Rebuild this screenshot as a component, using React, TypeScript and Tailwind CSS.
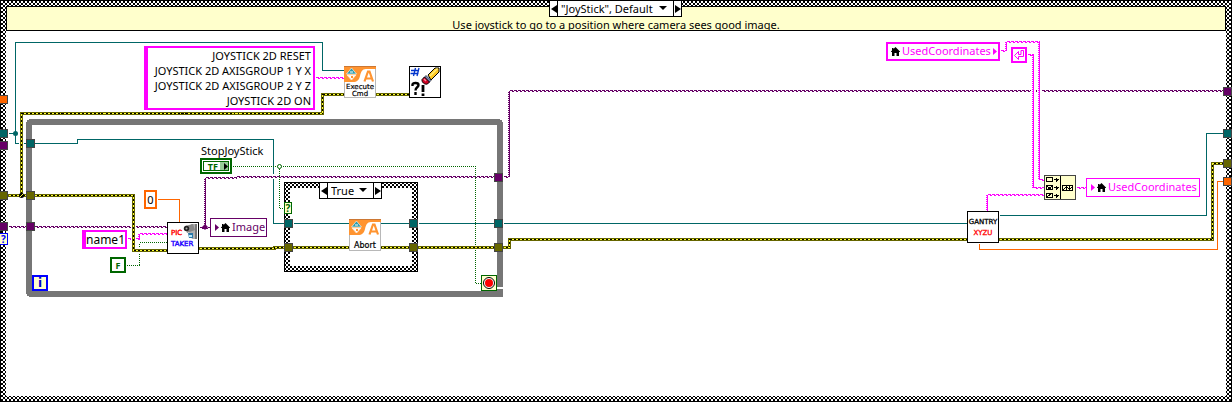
import React from 'react';

type Pt = [number, number];
type Kind = 'ref' | 'error' | 'image' | 'string' | 'bool' | 'number';

const COLORS: Record<Kind, string> = {
  ref: '#006666',
  error: '#666600',
  image: '#660066',
  string: '#ff00ff',
  bool: '#006600',
  number: '#ff6600',
};

const line = (pts: Pt[], d = 0) => pts.map(([x, y]) => `${x + 0.5 + d},${y + 0.5 + d}`).join(' ');

function Wire({ kind, pts, over }: { kind: Kind; pts: Pt[]; over?: boolean }) {
  const c = COLORS[kind];
  const p = line(pts);
  return (
    <g fill="none" stroke={c} strokeWidth={1} shapeRendering="crispEdges">
      {over && <polyline points={p} stroke="#fff" strokeWidth={5} />}
      {kind === 'error' && (
        <>
          <polyline points={p} strokeWidth={3} strokeLinecap="square" />
          <polyline points={p} stroke="#000" />
          <polyline points={p} stroke="#ffff33" strokeDasharray="2 2" />
        </>
      )}
      {(kind === 'image' || kind === 'string') &&
        pts.slice(1).map((b, i) => {
          const a = pts[i];
          const vertical = a[0] === b[0];
          return vertical ? (
            <g key={i}>
              <polyline points={line([a, b])} />
              <polyline points={line([[a[0] - 1, a[1]], [b[0] - 1, b[1]]])} strokeDasharray="1 1" />
            </g>
          ) : (
            <g key={i}>
              <polyline points={line([a, b])} strokeDasharray="3 1" />
              <polyline points={line([[a[0], a[1] + 1], [b[0], b[1] + 1]])} strokeDasharray="2 2" strokeDashoffset={2} />
            </g>
          );
        })}
      {kind === 'bool' && <polyline points={p} strokeDasharray="1 1" />}
      {(kind === 'ref' || kind === 'number') && <polyline points={p} />}
    </g>
  );
}

const WIRES: { kind: Kind; pts: Pt[]; over?: boolean }[] = [
  { kind: 'ref', pts: [[8, 133], [15, 133]] },
  { kind: 'ref', pts: [[344, 70], [322, 70], [322, 42], [15, 42], [15, 143], [26, 143]] },
  { kind: 'ref', pts: [[34, 143], [77, 143], [77, 139], [273, 139], [273, 223], [284, 223]] },
  { kind: 'ref', pts: [[293, 223], [409, 223]] },
  { kind: 'ref', pts: [[418, 223], [494, 223]] },
  { kind: 'ref', pts: [[503, 223], [967, 223]] },
  { kind: 'ref', pts: [[999, 215], [1206, 215], [1206, 133], [1223, 133]] },
  { kind: 'image', pts: [[8, 226], [26, 226]] },
  { kind: 'image', pts: [[34, 226], [167, 226]] },
  { kind: 'image', pts: [[199, 227], [210, 227]] },
  { kind: 'image', pts: [[205, 227], [205, 177], [236, 177]], over: true },
  { kind: 'image', pts: [[236, 176], [494, 176]], over: true },
  { kind: 'image', pts: [[503, 176], [509, 176], [509, 90], [1223, 90]] },
  { kind: 'string', pts: [[127, 238], [139, 238], [139, 233], [167, 233]] },
  { kind: 'bool', pts: [[126, 265], [139, 265], [139, 242], [167, 242]] },
  { kind: 'bool', pts: [[232, 166], [475, 166], [475, 283], [481, 283]] },
  { kind: 'bool', pts: [[279, 166], [279, 208], [284, 208]] },
  { kind: 'error', pts: [[21, 195], [21, 113], [322, 113], [322, 94], [344, 94]], over: true },
  { kind: 'error', pts: [[8, 195], [26, 195]] },
  { kind: 'error', pts: [[376, 94], [409, 94]] },
  { kind: 'error', pts: [[34, 195], [133, 195], [133, 250], [167, 250]], over: true },
  { kind: 'error', pts: [[199, 248], [274, 248], [274, 247], [284, 247]] },
  { kind: 'error', pts: [[293, 247], [409, 247]] },
  { kind: 'error', pts: [[418, 247], [494, 247]] },
  { kind: 'error', pts: [[503, 247], [509, 247], [509, 239], [967, 239]] },
  { kind: 'error', pts: [[999, 239], [1212, 239], [1212, 163], [1223, 163]] },
  { kind: 'string', pts: [[315, 77], [344, 77]] },
  { kind: 'number', pts: [[157, 199], [179, 199], [179, 222]] },
  { kind: 'number', pts: [[979, 243], [979, 249], [1217, 249], [1217, 181], [1223, 181]] },
  { kind: 'string', pts: [[1027, 54], [1033, 54], [1033, 187], [1044, 187]], over: true },
  { kind: 'string', pts: [[1000, 50], [1006, 50], [1006, 41], [1039, 41], [1039, 179], [1044, 179]], over: true },
  { kind: 'string', pts: [[987, 211], [987, 194], [1044, 194]] },
  { kind: 'string', pts: [[1076, 187], [1086, 187]] },
];

const TUNNELS: [number, number, string][] = [
  [-1, 95, '#ff6600'], [-1, 129, '#006666'], [-1, 141, '#660066'], [-1, 191, '#666600'], [-1, 222, '#660066'],
  [26, 139, '#006666'], [26, 191, '#666600'], [26, 222, '#660066'],
  [494, 173, '#660066'], [494, 219, '#006666'], [494, 243, '#666600'],
  [284, 219, '#006666'], [284, 243, '#666600'], [409, 219, '#006666'], [409, 243, '#666600'],
  [1223, 87, '#660066'], [1223, 129, '#006666'], [1223, 159, '#666600'], [1223, 177, '#ff6600'],
];

function Wiring() {
  return (
    <svg className="absolute left-0 top-0" width="1232" height="402" aria-hidden="true">
      <defs>
        <pattern id="weave" width="4" height="4" patternUnits="userSpaceOnUse">
          <rect width="4" height="4" fill="#fff" />
          <path d="M0 0h2v2h-2zM2 2h2v2h-2z" fill="#000" />
        </pattern>
      </defs>
      <g shapeRendering="crispEdges">
        <path d="M29 122H500V287" fill="none" stroke="#767676" strokeWidth="6" />
        <path d="M29 119V294H503" fill="none" stroke="#767676" strokeWidth="6" />
        <path d="M26 119h3v1h-2v2h-1zM26 297h3v-1h-2v-2h-1zM503 119h-3v1h2v2h1z" fill="#fff" />
        <rect x="497" y="288" width="6" height="8" fill="#767676" />
        <rect x="497" y="287" width="6" height="2" fill="#fff" />
      </g>
      {WIRES.map((w, i) => <Wire key={i} {...w} />)}
      <circle cx="15.5" cy="133.5" r="2.5" fill="#006666" />
      <circle cx="21.5" cy="195.5" r="2.5" fill="#000" />
      <path d="M20 197l3-3" stroke="#ff3" />
      <circle cx="279.5" cy="166.5" r="2" fill="#fff" stroke="#006600" />
      <path d="M205 224l3 3-3 3-3-3z" fill="#660066" />
      <path d="M284 182h134v90h-134zM290 188v78h122v-78z" fill="url(#weave)" fillRule="evenodd" shapeRendering="crispEdges" />
      <rect x="284.5" y="182.5" width="133" height="89" fill="none" stroke="#000" shapeRendering="crispEdges" />
      <g shapeRendering="crispEdges">
        {TUNNELS.map(([x, y, c], i) => (
          <rect key={i} x={x + 0.5} y={y + 0.5} width="8" height="8" fill={c} stroke="#444" />
        ))}
      </g>
    </svg>
  );
}

function Selector({ label, value, options }: { label: string; value: string; options: string[] }) {
  const arrow = 'flex w-[7px] shrink-0 items-center justify-center';
  return (
    <div className="flex h-full w-full border border-black bg-white text-black">
      <button className={arrow} aria-label={`Previous ${label}`}>
        <svg width="6" height="8" viewBox="0 0 6 8"><path d="M6 0v8L0 4z" /></svg>
      </button>
      <div className="relative flex min-w-0 flex-1 border-x border-black">
        <select aria-label={label} defaultValue={value} className="w-full appearance-none bg-transparent pl-[3px] text-[11px] leading-[15px] outline-none">
          {options.map((o) => <option key={o}>{o}</option>)}
        </select>
        <svg className="pointer-events-none absolute right-1.5 top-[5px]" width="8" height="4" viewBox="0 0 8 4"><path d="M0 0h8L4 4z" /></svg>
      </div>
      <button className={arrow} aria-label={`Next ${label}`}>
        <svg width="6" height="8" viewBox="0 0 6 8"><path d="M0 0v8l6-4z" /></svg>
      </button>
    </div>
  );
}

const Home = () => (
  <svg className="shrink-0" width="9" height="9" viewBox="0 0 9 9" fill="#000" aria-hidden="true">
    <path d="M4.500 0L9 4.500V5H8v4H5.500V6h-2v3H1V5H0v-.5L1 3.500V1h1.500v1z" />
  </svg>
);
const Play = () => (
  <svg className="shrink-0" width="4" height="7" viewBox="0 0 4 7" fill="currentColor" aria-hidden="true"><path d="M0 0v7l4-3.500z" /></svg>
);

function AxisIcon({ lines }: { lines: string[] }) {
  const single = lines.length === 1;
  return (
    <svg width="32" height="32" viewBox="0 0 32 32" role="img" aria-label={lines.join(' ')}>
      <rect x=".5" y=".5" width="31" height="31" fill="#fff" stroke="#b8b8b8" />
      <path d="M0 0h32v3H22c-4 0-5 3-6 7s-3 6-7 6H0z" fill="#ff9430" />
      <path d="M0 0h32v1H0z" fill="#cc7733" />
      <path d="M7.500 2L12.500 8h-10z" fill="#2c9cac" stroke="#fff" strokeWidth=".6" />
      <path d="M6 5.500h3v1H6z" fill="#fff" />
      <path d="M3 9h9l-4.500 5z" fill="#fff" stroke="#ffe6cc" />
      <path d="M7 10h2v2H7z" fill="#ff9430" />
      <path d="M20.500 15.500L24 5.500h1.500L29 15.500M22 12.500h6" fill="none" stroke="#ff9430" strokeWidth="2.200" />
      {lines.map((t, i) => (
        <text key={t} x="16" y={(single ? 29 : 23) + i * 7} textAnchor="middle" fontSize={single ? 8 : 7} fontFamily="DejaVu Sans, sans-serif" fill="#000" stroke="#000" strokeWidth=".2">{t}</text>
      ))}
    </svg>
  );
}

function EraserIcon() {
  return (
    <svg width="32" height="32" viewBox="0 0 32 32" role="img" aria-label="Clear errors">
      <rect x=".5" y=".5" width="31" height="31" fill="#fff" stroke="#000" />
      <path d="M4.500 10L6.500 2M8 10L10 2M2 4.500h8M1.500 7.500h8" stroke="#0033cc" strokeWidth="1.300" />
      <path d="M3.500 20v-1.500c0-2 6-2 6 .5 0 2.500-3 2-3 5.500M6.500 26v3" fill="none" stroke="#000" strokeWidth="2.400" />
      <path d="M14 19v7M14 27.500v2.500" stroke="#000" strokeWidth="2.800" />
      <path d="M19 9l7-7h4v4l-8 8z" fill="#ffc820" stroke="#000" />
      <path d="M21 10l7.500-7.500" stroke="#fff080" strokeWidth="1.500" />
      <path d="M17 9.500l5 5-2 2-5-5z" fill="#7788bb" stroke="#000" strokeWidth=".6" />
      <path d="M15.500 11l5 5-2 2c-3 1-6-2-5.500-4.500z" fill="#cc0022" stroke="#000" />
      <path d="M15 13l2 2" stroke="#ff8899" strokeWidth="1.500" />
    </svg>
  );
}

function PicTakerIcon() {
  return (
    <svg width="32" height="32" viewBox="0 0 32 32" role="img" aria-label="Pic taker">
      <rect x=".5" y=".5" width="31" height="31" fill="#fff" stroke="#000" />
      <path d="M24 2h6v15h-5l-3-6z" fill="#b0b0b0" />
      <path d="M28 2h2v15h-2z" fill="#777" />
      <path d="M18 4l8-2 2 6-8 3z" fill="#888" />
      <circle cx="19.500" cy="6.500" r="2.700" fill="#222" />
      <circle cx="19.500" cy="6.500" r="1" fill="#aaa" />
      <path d="M21 11h5v5h-4z" fill="#2c78a8" />
      <path d="M22 13h3v2h-3z" fill="#b8e8f8" />
      <g fontFamily="DejaVu Sans, sans-serif" fontSize="7" strokeWidth=".4">
        <text x="4" y="13" fill="#f00" stroke="#f00">PIC</text>
        <text x="4" y="24" fill="#20f" stroke="#20f">TAKER</text>
      </g>
    </svg>
  );
}

function GantryIcon() {
  return (
    <svg width="32" height="32" viewBox="0 0 32 32" role="img" aria-label="Gantry">
      <rect x=".5" y=".5" width="31" height="31" fill="#fff" stroke="#000" />
      <g fontFamily="DejaVu Sans, sans-serif" fontSize="7" textAnchor="middle">
        <text x="16" y="13" fill="#000" stroke="#000" strokeWidth=".3">GANTRY</text>
        <text x="16" y="24" fill="#f00" stroke="#f00" strokeWidth=".3">XYZU</text>
      </g>
    </svg>
  );
}

function ConcatIcon() {
  return (
    <svg width="32" height="25" viewBox="0 0 32 25" role="img" aria-label="Concatenate" shapeRendering="crispEdges">
      <rect x=".5" y=".5" width="31" height="24" fill="#ffffcc" stroke="#444" />
      <path d="M16.500 1v23" stroke="#000" />
      <g fill="none" stroke="#000">
        <path d="M2.500 2.500h6v4h-6zM2.500 10.500h6v4h-6zM2.500 18.500h6v4h-6z" />
        <path d="M10 4.500h5M12.500 2.500v4M13.500 3.500v2M10 12.500h5M12.500 10.500v4M13.500 11.500v2M10 20.500h5M12.500 18.500v4M13.500 19.500v2" />
        <path d="M3 11l5 4M3 15l5-4M3 22l5-4" />
        <path d="M18.500 10.500h10v5h-10zM22.500 10v5M25.500 10v5M19 15l4-4M22 11l4 4M25 15l4-4" />
      </g>
    </svg>
  );
}

export default function App() {
  return (
    <main className="relative flex min-h-screen w-full flex-col bg-white font-['Noto_Sans','Segoe_UI',sans-serif] text-[11px] text-black">
      <div className="flex flex-1 flex-col border border-black bg-[conic-gradient(#000_25%,#fff_0_50%,#000_0_75%,#fff_0)] bg-[size:4px_4px] p-[5px]">
        <header className="flex h-[25px] items-end justify-center border border-black bg-[#ffffcc]">
          <p className="leading-[11px]">Use joystick to go to a position where camera sees good image.</p>
        </header>
        <div className="flex-1 bg-white" />
      </div>

      <section className="absolute left-0 top-0 h-full w-full" aria-label="Block diagram">
        <Wiring />

        <div className="absolute left-[549px] top-0 h-[17px] w-[133px]">
          <Selector label="case" value={'"JoyStick", Default'} options={['"JoyStick", Default']} />
        </div>
        <div className="absolute left-[319px] top-[182px] h-[17px] w-[63px]">
          <Selector label="inner case" value="True" options={['True', 'False']} />
        </div>

        <textarea
          aria-label="Joystick commands"
          readOnly
          wrap="off"
          rows={4}
          className="absolute left-[144px] top-[46px] h-16 w-[171px] resize-none overflow-hidden border-2 border-l-4 border-[#ff00ff] bg-white pr-0.5 text-right leading-[15px] outline-none"
          value={'JOYSTICK 2D RESET\nJOYSTICK 2D AXISGROUP 1 Y X\nJOYSTICK 2D AXISGROUP 2 Y Z\nJOYSTICK 2D ON'}
        />

        <div className="absolute left-[344px] top-[66px]"><AxisIcon lines={['Execute', 'Cmd']} /></div>
        <div className="absolute left-[409px] top-[66px]"><EraserIcon /></div>
        <div className="absolute left-[349px] top-[219px]"><AxisIcon lines={['Abort']} /></div>
        <div className="absolute left-[167px] top-[222px]"><PicTakerIcon /></div>
        <div className="absolute left-[967px] top-[211px]"><GantryIcon /></div>
        <div className="absolute left-[1044px] top-[175px]"><ConcatIcon /></div>

        <div className="absolute left-[200px] top-[143px] flex flex-col items-start">
          <label htmlFor="stop" className="pl-px leading-[15px]">StopJoyStick</label>
          <button id="stop" className="flex h-4 w-8 items-center justify-center border-2 border-[#006600] bg-white">
            <span className="flex h-2.5 w-[26px] items-center justify-end border border-[#006600] text-[9px] font-bold leading-none text-[#006600]">
              TF
              <span className="ml-0.5 flex h-full w-2 items-center justify-end bg-[#99cc99] text-black"><Play /></span>
            </span>
          </button>
        </div>

        <input aria-label="Index" readOnly value="0" className="absolute left-[144px] top-[190px] h-[19px] w-[13px] border-2 border-[#ff6600] bg-white text-center outline-none" />
        <input aria-label="Image name" readOnly value="name1" className="absolute left-[82px] top-[230px] h-[19px] w-[45px] border-2 border-l-4 border-[#ff00ff] bg-white text-center text-xs outline-none" />
        <button aria-label="False constant" className="absolute left-[110px] top-[257px] flex h-4 w-4 items-center justify-center border-2 border-[#006600] bg-white text-[9px] font-bold leading-none text-[#006600]">F</button>

        <div className="absolute left-[210px] top-[218px] flex h-[19px] w-[57px] items-center gap-0.5 border border-[#660066] bg-white pl-1 text-[#660066]">
          <Play /><Home /><span>Image</span>
        </div>
        <div className="absolute left-[886px] top-[42px] flex h-[19px] w-[114px] items-center gap-0.5 border-2 border-[#ff00ff] bg-white pl-[3px] text-[#ff00ff]">
          <Home /><span>UsedCoordinates</span><Play />
        </div>
        <div className="absolute left-[1086px] top-[178px] flex h-[19px] w-[114px] items-center gap-0.5 border border-[#ff00ff] bg-white pl-1 text-[#ff00ff]">
          <Play /><Home /><span>UsedCoordinates</span>
        </div>

        <div className="absolute left-[1011px] top-[47px] h-4 w-4 border-2 border-[#ff00ff] bg-white">
          <svg width="12" height="12" viewBox="0 0 12 12" fill="none" stroke="#ff00ff" aria-label="End of line">
            <path d="M8 1.500h2.500v6h-5v3L1.500 6.500l4-4v3H8z" />
          </svg>
        </div>

        <div className="absolute left-8 top-[275px] flex h-4 w-4 items-center justify-center border-2 border-[#0000ff] bg-[#ffffcc] font-['DejaVu_Sans',sans-serif] text-xs font-bold leading-none text-[#0000cc]">i</div>
        <div className="absolute left-0 top-[233px] flex h-3 w-2 items-center justify-center border border-l-0 border-[#0000ff] bg-[#ffffcc] text-[10px] font-bold leading-none text-[#0000ff]">?</div>
        <div className="absolute left-[284px] top-[202px] flex h-3 w-2 items-center justify-center border border-[#006600] bg-[#ffffcc] text-[10px] font-bold leading-none text-[#006600]">?</div>
        <button aria-label="Stop condition" className="absolute left-[481px] top-[275px] flex h-4 w-4 items-center justify-center border border-[#006600] bg-[#ffffcc]">
          <svg width="12" height="12" viewBox="0 0 12 12"><circle cx="6" cy="6" r="5.500" fill="#fff" stroke="#000" /><circle cx="6" cy="6" r="4" fill="#f00" /></svg>
        </button>
      </section>
    </main>
  );
}
